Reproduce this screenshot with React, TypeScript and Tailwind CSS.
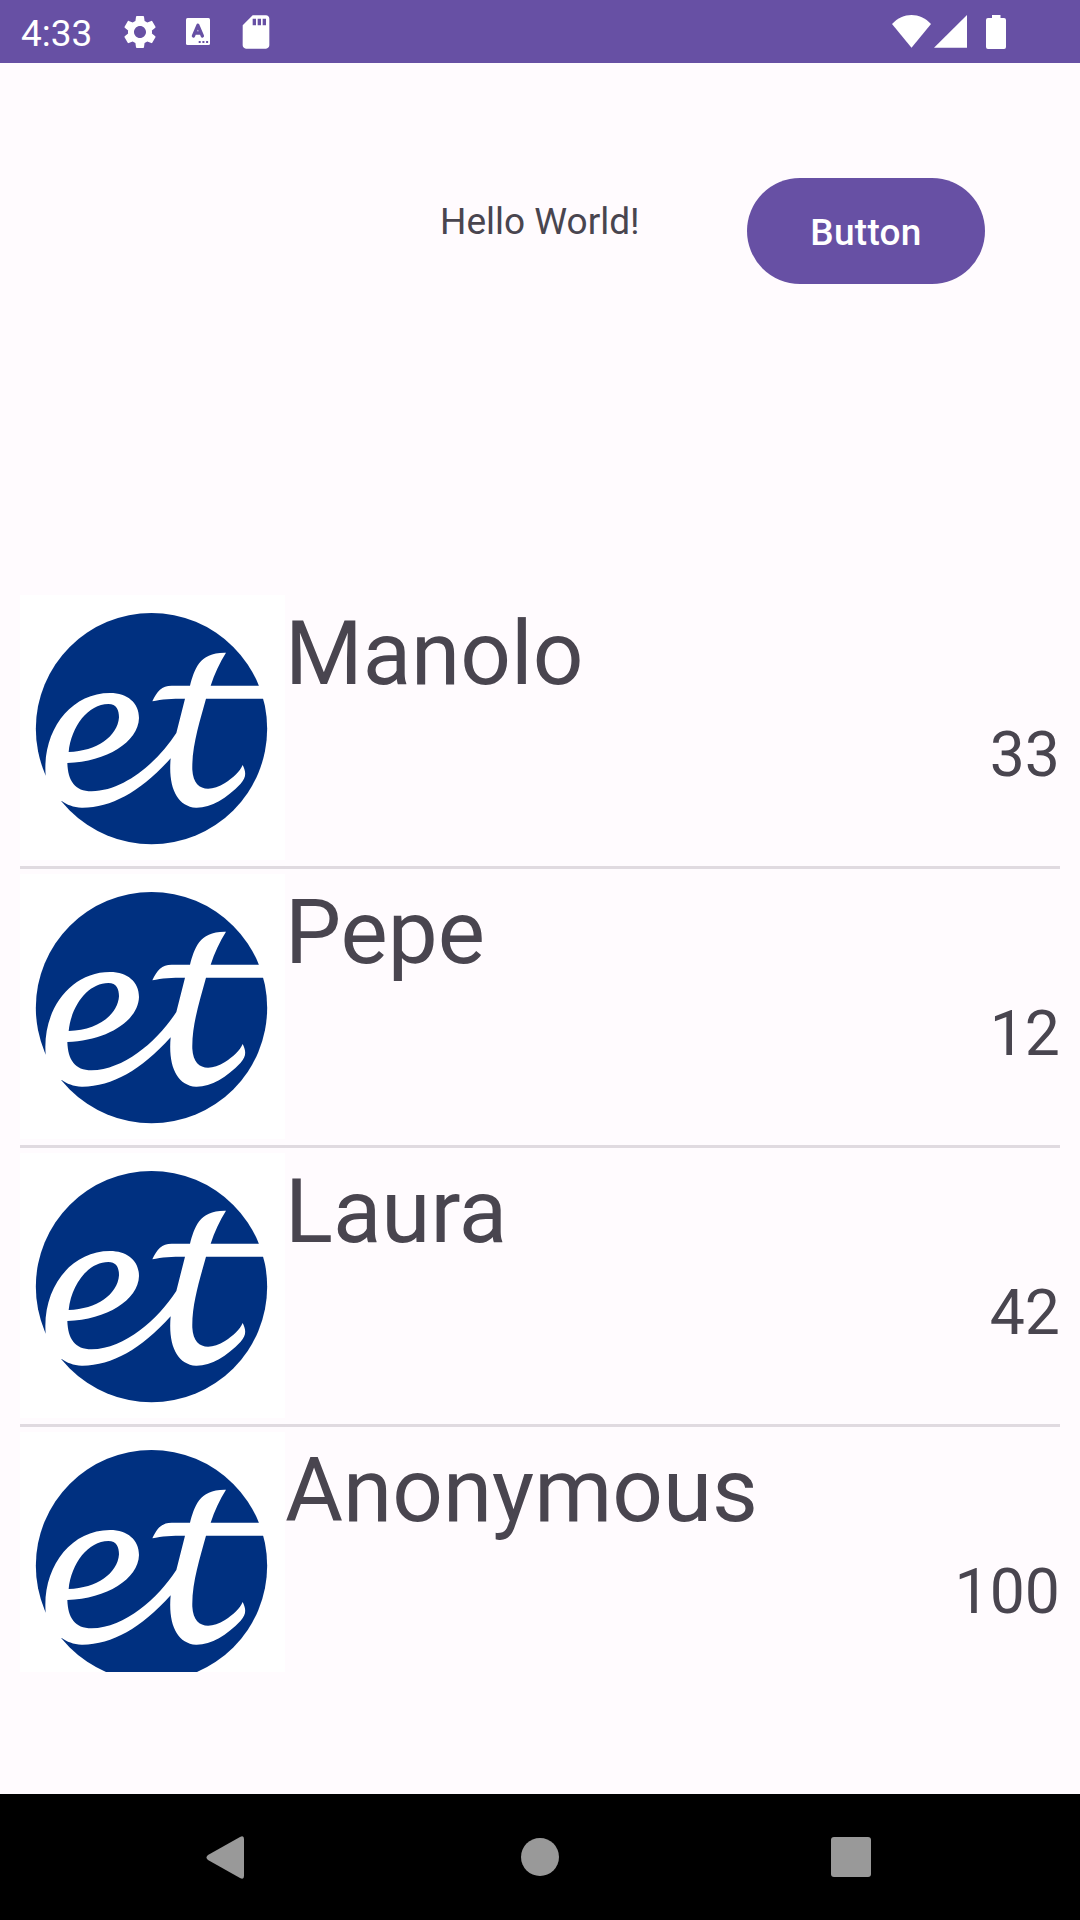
import React from 'react';
import { MdSdCard, MdSettings } from 'react-icons/md';

type Person = {
	name: string;
	value: number;
};

const people: Person[] = [
	{ name: 'Manolo', value: 33 },
	{ name: 'Pepe', value: 12 },
	{ name: 'Laura', value: 42 },
	{ name: 'Anonymous', value: 100 },
];

function KeyboardIcon() {
	return (
		<svg className="ml-[26px] h-[27px] w-6" viewBox="0 0 24 27">
			<rect width="24" height="27" rx="1.5" fill="#fff" />
			<path
				d="M7.4 18 11.9 7.3 16.4 18M8.8 15h6.2"
				fill="none"
				stroke="#6750a4"
				strokeWidth="3.3"
				strokeLinecap="round"
				strokeLinejoin="round"
			/>
			<path d="M12.7 23h2v2h-2zM16.4 23h2v2h-2zM20.1 23h2v2h-2z" fill="#6750a4" />
		</svg>
	);
}

function StatusBar() {
	return (
		<div className="flex h-[63px] shrink-0 items-center bg-[#6750a4] text-white">
			<span className="ml-[21px] w-[99px] pt-[4px] text-[37px] leading-none">4:33</span>
			<MdSettings className="size-10" />
			<KeyboardIcon />
			<MdSdCard className="ml-[26px] size-10" />
			<svg className="ml-auto mr-[74px] h-[34px] w-[114px]" viewBox="0 0 114 34" fill="#fff">
				<path d="M0 9C11-3 28-3 39 9L19.5 32.7Z" />
				<path d="M42 32.7 75 0v32.7Z" />
				<path d="M100 0h8.5v3h3.5q2 0 2 2v27q0 2-2 2H96q-2 0-2-2V5q0-2 2-2h4Z" />
			</svg>
		</div>
	);
}

function Logo() {
	return (
		<svg className="mt-[5px] size-[265px] shrink-0 bg-white" viewBox="30 16 795 795">
			<circle cx="424.5" cy="417" r="347" fill="#003080" />
			<path
				fill="#fff"
				fillRule="evenodd"
				d="M648 189C630 218 613 252 602 288H800V327H588C570 393 545 470 547 540C550 602 596 610 645 580C670 563 689 547 698 526C708 546 710 562 692 582C650 626 602 655 558 654C500 650 474 590 482 506C392 605 305 655 215 654C190 653 170 645 155 634L90 634L90 558H107C96 425 180 310 300 310C353 310 387 340 387 385C385 457 290 516 172 520C174 573 194 605 245 605C345 603 444 515 499 430L525 327C485 327 455 328 427 335C441 305 455 288 485 288H540C553 240 567 187 648 189ZM176 487C184 410 235 343 295 343C320 343 327 361 327 383C323 440 260 485 176 487Z"
			/>
		</svg>
	);
}

function PersonRow({ name, value }: Person) {
	return (
		<li className="flex h-[279px] border-b-[3px] border-[#e0dae0]">
			<Logo />
			<div className="flex grow flex-col">
				<span className="mt-[9px] text-[89px] leading-[110px]">{name}</span>
				<span className="mt-[9px] text-right text-[62.5px] leading-[74px]">{value}</span>
			</div>
		</li>
	);
}

function NavigationBar() {
	return (
		<div className="flex h-[126px] shrink-0 items-center bg-black pl-[206px] pr-[209px]">
			<svg className="h-[43px] w-[38px]" viewBox="0 0 38 43" fill="#999">
				<path d="M34 1Q38-1 38 3V40Q38 44 34 42L2 24Q-1 21.5 2 19Z" />
			</svg>
			<div className="ml-[277px] size-[38px] rounded-full bg-[#999]" />
			<div className="ml-auto h-10 w-10 rounded-[3px] bg-[#999]" />
		</div>
	);
}

export default function App() {
	return (
		<div className="flex h-[1920px] w-[1080px] flex-col overflow-hidden bg-[#fffbfe] font-[Roboto,sans-serif] text-[#49454f]">
			<StatusBar />
			<main className="flex grow flex-col">
				<div className="flex h-[527px] items-start">
					<p className="ml-[440px] mt-[137px] text-[37px] leading-[44px]">Hello World!</p>
					<button
						type="button"
						className="ml-auto mr-[95px] mt-[115px] h-[106px] w-[238px] rounded-full bg-[#6750a4] pt-[4px] text-[37px] font-medium tracking-[0.00714em] text-white"
					>
						Button
					</button>
				</div>
				<ul className="mx-5 h-[1082px] overflow-hidden">
					{people.map((person) => (
						<PersonRow key={person.name} name={person.name} value={person.value} />
					))}
				</ul>
			</main>
			<NavigationBar />
		</div>
	);
}
